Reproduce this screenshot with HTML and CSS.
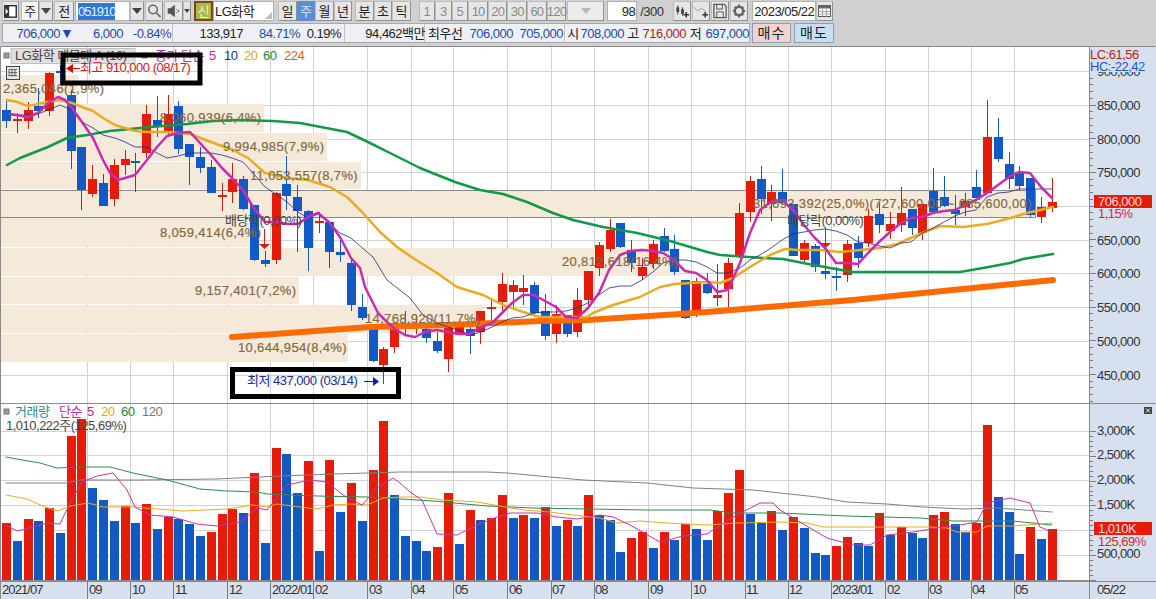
FILE: index.html
```html
<!DOCTYPE html>
<html lang="ko">
<head>
<meta charset="utf-8">
<title>LG화학 주봉 차트</title>
<link rel="stylesheet" href="styles.css">
</head>
<body>
<header class="toolbars">
  <div class="tools">
    <button class="btn b-layout"><svg viewBox="0 0 17 18" class="ico"><rect x="2" y="3" width="13" height="13" fill="#fff" stroke="#222" stroke-width="1.5"/><rect x="2" y="3" width="5" height="13" fill="#333"/><path d="M3 6l3 3.5-3 3.5z" fill="#fff"/></svg></button>
    <button class="btn b-ju">주</button>
    <button class="btn b-arrow"><i class="caret"></i></button>
    <button class="btn b-prev">전</button>
    <div class="field b-code"><span class="sel">051910</span></div>
    <button class="btn b-arrow2"><i class="caret"></i></button>
    <button class="btn b-search"><svg viewBox="0 0 17 18" class="ico"><circle cx="7.5" cy="7.5" r="4.5" fill="none" stroke="#666" stroke-width="1.6"/><path d="M11 11l4.5 4.5" stroke="#777" stroke-width="2.2"/></svg></button>
    <button class="btn b-speak"><svg viewBox="0 0 19 18" class="ico"><path d="M3 6h3l5-4v14l-5-4H3z" fill="#555"/><path d="M13 7v1M13 10v1M15 8v2" stroke="#555" stroke-width="1.2"/></svg></button>
    <button class="btn b-arrow3"><i class="caret small"></i></button>
    <div class="sin">신</div>
    <div class="field b-name">LG화학<i class="corner"></i></div>
    <div class="period">
      <button class="btn p">일</button><button class="btn p on">주</button><button class="btn p">월</button><button class="btn p">년</button>
    </div>
    <div class="period gap">
      <button class="btn p">분</button><button class="btn p">초</button><button class="btn p">틱</button>
    </div>
    <div class="period nums">
      <button class="btn n">1</button><button class="btn n">3</button><button class="btn n">5</button><button class="btn n">10</button><button class="btn n">20</button><button class="btn n">30</button><button class="btn n">60</button><button class="btn n">120</button>
    </div>
    <div class="btn b-combo"><i class="caret pale"></i></div>
    <div class="field b-count">98</div>
    <span class="total">/300</span>
    <button class="btn b-i"><svg viewBox="0 0 17 18" class="ico"><path d="M4 3v10M9 5v9" stroke="#444"/><rect x="2.5" y="5" width="3" height="5" fill="#444"/><rect x="7.5" y="7" width="3" height="5" fill="#444"/><path d="M13 10v6M10 13h6" stroke="#333" stroke-width="1.6"/></svg></button>
    <button class="btn b-i"><svg viewBox="0 0 17 18" class="ico"><path d="M1 5l4 4 4-3 5 4" fill="none" stroke="#999"/><path d="M13 10v6M10 13h6" stroke="#333" stroke-width="1.6"/></svg></button>
    <button class="btn b-i"><svg viewBox="0 0 17 18" class="ico"><path d="M2 2h11l2 2v12H2z" fill="none" stroke="#555" stroke-width="1.3"/><path d="M5 2v5h6V2M5 16v-6h7v6" fill="none" stroke="#555"/></svg></button>
    <button class="btn b-i"><svg viewBox="0 0 17 18" class="ico"><circle cx="8.5" cy="9" r="4.5" fill="none" stroke="#666" stroke-width="2.6"/><path d="M8.5 2v3M8.5 13v3M2 9h3M12 9h3M4 4.500l2 2M11 11.500l2 2M13 4.500l-2 2M6 11.500l-2 2" stroke="#666" stroke-width="2"/></svg></button>
    <div class="field b-date">2023/05/22</div>
    <button class="btn b-cal"><svg viewBox="0 0 15 18" class="ico"><rect x="1.500" y="3.500" width="12" height="11" fill="#fff" stroke="#555"/><path d="M1.500 3.500h12v3h-12z" fill="#666"/><path d="M1.500 9.500h12M1.500 12h12M5.500 6.500v8M9.500 6.500v8" stroke="#aaa"/></svg></button>
  </div>
  <div class="tools quote">
    <div class="panel">
      <div class="sec s-a"><span class="up">706,000</span><span class="tri">▼</span><span class="up">6,000</span><span class="up">-0.84%</span></div>
      <div class="sec s-b"><span>133,917</span><span class="up">84.71%</span><span>0.19%</span></div>
      <div class="sec s-c"><span>94,462백만</span></div>
      <div class="sec s-d"><span class="lbl">최우선</span><span class="up">706,000</span><span class="up">705,000</span></div>
      <div class="sec s-e"><span class="lbl">시</span><span class="up">708,000</span><span class="lbl">고</span><span class="dn">716,000</span><span class="lbl">저</span><span class="up">697,000</span></div>
    </div>
    <button class="trade buy">매수</button>
    <button class="trade sell">매도</button>
  </div>
</header>

<main class="chart">
  <svg class="pane pane-price" viewBox="0 46 1156 357">
    <rect class="axis-bg" x="1089" y="46" width="67" height="357"/>
    <path class="grid" d="M0 71.500H1089M0 105.500H1089M0 139.500H1089M0 172.500H1089M0 206.500H1089M0 240.500H1089M0 273.500H1089M0 307.500H1089M0 341.500H1089M0 375.500H1089"/>
    <g id="vgrid-price" class="grid"></g>
    <g class="bands">
      <rect x="0" y="75" width="78" height="28"/>
      <rect x="0" y="104" width="264" height="28"/>
      <rect x="0" y="133" width="327" height="28"/>
      <rect x="0" y="162" width="361" height="27"/>
      <rect x="0" y="218" width="259" height="29"/>
      <rect x="0" y="248" width="680" height="28"/>
      <rect x="0" y="277" width="299" height="27"/>
      <rect x="0" y="305" width="483" height="28"/>
      <rect x="0" y="334" width="348" height="28"/>
      <rect class="band-max" x="0.500" y="190.500" width="1035" height="27"/>
    </g>
    <g id="candles"></g>
    <g class="marks">
      <path d="M264.500 229v16M825.500 228v16"/>
      <polygon points="259,244 270,244 264.500,249"/>
      <polygon points="820,243 831,243 825.500,248"/>
    </g>
    <g id="ma-price"></g>
    <g class="band-labels">
      <text x="3" y="93">2,365,046(1,9%)</text>
      <text x="160" y="122">8,060,939(6,4%)</text>
      <text x="223" y="151">9,994,985(7,9%)</text>
      <text x="250" y="180">11,053,557(8,7%)</text>
      <text x="753" y="208">31,693,392(25,0%)(727,600,00 ~ 685,600,00)</text>
      <text x="160" y="237">8,059,414(6,4%)</text>
      <text x="562" y="266">20,812,618(16,4%)</text>
      <text x="195" y="295">9,157,401(7,2%)</text>
      <text x="365" y="323">14,768,920(11,7%)</text>
      <text x="238" y="352">10,644,954(8,4%)</text>
    </g>
    <text class="t dark" x="225" y="225">배당락(0,00%)</text>
    <text class="t dark" x="787" y="225">배당락(0,00%)</text>

    <rect class="legend-box" x="11" y="48.500" width="124" height="15"/>
    <text class="t dark" x="15" y="60">LG화학 매물대 A (10)</text>
    <rect class="sq" x="4" y="53" width="5" height="5"/>
    <rect class="sq" x="142" y="53" width="5" height="5"/>
    <text class="t c-ma5" x="155" y="60">종가 단순</text>
    <text class="t c-ma5" x="209" y="60">5</text>
    <text class="t c-ma10" x="224" y="60">10</text>
    <text class="t c-ma20" x="244" y="60">20</text>
    <text class="t c-ma60" x="263" y="60">60</text>
    <text class="t c-ma224" x="284" y="60">224</text>
    <g class="tbl-ico">
      <rect x="6.500" y="66.500" width="13" height="13"/>
      <path d="M9 69.500h8M9 72.500h8M9 75.500h8M9 69.500v7M12 69.500v7M15 69.500v7"/>
    </g>

    <rect class="note" x="63" y="55" width="137" height="28"/>
    <path class="arrow-hi" d="M72 68.500H80"/>
    <polygon class="arrow-hi-h" points="66,68.500 73,64 73,73"/>
    <text class="t c-hi" x="80" y="72">최고 910,000 (08/17)</text>
    <rect class="note" x="232.500" y="369.500" width="166" height="27"/>
    <text class="t c-lo" x="247" y="385">최저 437,000 (03/14)</text>
    <path class="arrow-lo" d="M364 381.500H374"/>
    <polygon class="arrow-lo-h" points="379,381.500 373,377 373,386"/>

    <g id="ticks-price" class="ticks"></g>
    <g class="axis-labels">
      <text x="1097" y="76">900,000</text>
      <text x="1097" y="110">850,000</text>
      <text x="1097" y="144">800,000</text>
      <text x="1097" y="177">750,000</text>
      <text x="1097" y="245">650,000</text>
      <text x="1097" y="278">600,000</text>
      <text x="1097" y="312">550,000</text>
      <text x="1097" y="346">500,000</text>
      <text x="1097" y="380">450,000</text>
    </g>
    <rect class="axis-cover" x="1090" y="47" width="66" height="25"/>
    <text class="t axis-lc" x="1090" y="59">LC:61,56</text>
    <text class="t axis-hc" x="1090" y="71">HC:-22,42</text>
    <rect class="tag" x="1094" y="195" width="58" height="13"/>
    <text class="t tag-text" x="1098" y="206">706,000</text>
    <text class="t axis-pct" x="1098" y="218">1,15%</text>
    <path class="frame" d="M0.500 46.500H1155.500M0.500 46.500V403M1089.500 46.500V403"/>
  </svg>

  <svg class="pane pane-vol" viewBox="0 403 1156 178">
    <rect class="axis-bg" x="1089" y="403" width="67" height="178"/>
    <path class="grid" d="M0 431.500H1089M0 455.500H1089M0 480.500H1089M0 505.500H1089M0 530.500H1089M0 555.500H1089"/>
    <g id="vgrid-vol" class="grid"></g>
    <g id="bars"></g>
    <g id="ma-vol"></g>
    <rect class="sq" x="4" y="409" width="5" height="5"/>
    <text class="t c-vol" x="15" y="416">거래량</text>
    <text class="t c-ma5" x="59" y="416">단순</text>
    <text class="t c-ma5" x="87" y="416">5</text>
    <text class="t c-ma20" x="101" y="416">20</text>
    <text class="t c-ma60" x="121" y="416">60</text>
    <text class="t c-ma120" x="142" y="416">120</text>
    <text class="t dark" x="6" y="430">1,010,222주(125,69%)</text>
    <g id="ticks-vol" class="ticks"></g>
    <g class="axis-labels">
      <text x="1097" y="435">3,000K</text>
      <text x="1097" y="459">2,500K</text>
      <text x="1097" y="484">2,000K</text>
      <text x="1097" y="509">1,500K</text>
      <text x="1097" y="558">500,000</text>
    </g>
    <rect class="tag" x="1094" y="522" width="58" height="13"/>
    <text class="t tag-text" x="1098" y="533">1,010K</text>
    <text class="t axis-pct" x="1098" y="546">125,69%</text>
    <rect class="close-box" x="1144" y="407" width="8" height="7"/>
    <path class="close-x" d="M1146 408.500l4 4M1150 408.500l-4 4"/>
    <path class="frame" d="M0.500 403.500H1155.500M0.500 403V581M1089.500 403V581M0 580.500H1089"/>
  </svg>

  <svg class="pane pane-x" viewBox="0 581 1156 18">
    <rect class="axis-bg" x="0" y="581" width="1156" height="18"/>
    <g id="ticks-x" class="ticks"></g>
    <g class="x-labels">
      <text x="2" y="594">2021/07</text><text x="89" y="594">09</text><text x="132" y="594">10</text><text x="175" y="594">11</text><text x="229" y="594">12</text><text x="272" y="594">2022/01</text><text x="315" y="594">02</text><text x="369" y="594">03</text><text x="412" y="594">04</text><text x="455" y="594">05</text><text x="509" y="594">06</text><text x="552" y="594">07</text><text x="595" y="594">08</text><text x="650" y="594">09</text><text x="693" y="594">10</text><text x="746" y="594">11</text><text x="789" y="594">12</text><text x="832" y="594">2023/01</text><text x="887" y="594">02</text><text x="929" y="594">03</text><text x="972" y="594">04</text><text x="1015" y="594">05</text><text x="1097" y="594">05/22</text>
    </g>
    <path class="frame" d="M0 581.500H1156M0.500 581V599M1089.500 581V599"/>
  </svg>
</main>
<script src="chart.js"></script>
</body>
</html>
```
FILE: styles.css
```css
html, body { margin: 0; padding: 0; width: 1156px; height: 599px; overflow: hidden; background: #d0d0d0; }
body { font: 13px/1 "Liberation Sans", "Noto Sans CJK KR", sans-serif; color: #222; letter-spacing: -.5px; }
button { font: inherit; letter-spacing: inherit; color: inherit; padding: 0; margin: 0; }

.toolbars { height: 46px; padding: 1px 0 0 2px; box-sizing: border-box; background: #d0d0d0; }
.tools { display: flex; align-items: stretch; height: 20px; }
.btn { box-sizing: border-box; height: 20px; background: #e6e6e6; border: 1px solid #bdbdbd; border-right-color: #909090; border-bottom-color: #909090; display: flex; align-items: center; justify-content: center; }
.ico { width: 100%; height: 100%; display: block; }
.field { box-sizing: border-box; height: 20px; background: #fff; border: 1px solid #b0b0b0; display: flex; align-items: center; }
.caret { width: 0; height: 0; border-left: 5px solid transparent; border-right: 5px solid transparent; border-top: 6px solid #444; }
.caret.small { border-left-width: 3px; border-right-width: 3px; border-top-width: 4px; }
.caret.pale { border-top-color: #b8b8b8; }

.b-layout { width: 17px; margin-right: 2px; }
.b-ju { width: 18px; background: #f4f4f4; }
.b-arrow { width: 14px; margin-right: 1px; }
.b-prev { width: 20px; margin-right: 1px; }
.b-code { width: 55px; padding-left: 2px; }
.sel { background: #2f78d4; color: #e4f0ff; padding: 2px 0; width: 37px; display: block; letter-spacing: -1px; }
.b-arrow2 { width: 14px; margin-right: 1px; }
.b-search { width: 18px; margin-right: 1px; }
.b-speak { width: 19px; }
.b-arrow3 { width: 8px; margin-right: 3px; }
.sin { box-sizing: border-box; width: 19px; height: 20px; border: 2px solid #7a4a16; background: #a9b84e; color: #ecf3c8; display: flex; align-items: center; justify-content: center; }
.b-name { width: 61px; padding-left: 1px; position: relative; margin-right: 4px; }
.corner { position: absolute; right: 1px; bottom: 1px; width: 0; height: 0; border-left: 7px solid transparent; border-bottom: 7px solid #bbb; }
.period { display: flex; }
.period .p { width: 18.500px; }
.period .on { background: #5b8fd0; color: #dce9f8; border-color: #5b8fd0; }
.period.gap { margin-left: 3px; margin-right: 8px; }
.nums .n { width: 16.600px; color: #8b8b8b; font-size: 13px; font-weight: 400; }
.nums .n:nth-child(n+4) { width: 19.600px; letter-spacing: -.8px; }
.b-combo { width: 37px; margin-left: 1px; margin-right: 3px; background: #ececec; }
.b-count { width: 30px; justify-content: flex-end; padding-right: 1px; }
.total { width: 36px; padding-left: 3px; align-self: center; color: #333; box-sizing: border-box; }
.b-i { width: 18px; margin-right: 1px; }
.b-date { width: 64px; margin-left: 3px; justify-content: center; color: #222; }
.b-cal { width: 17px; }

.quote { height: 21px; margin-top: 2px; }
.panel { width: 748px; box-sizing: border-box; display: flex; height: 20px; background: #eef0f6; border: 1px solid #a8a8a8; }
.sec { box-sizing: border-box; display: grid; align-items: center; justify-items: end; border-right: 1px solid #c4c4c4; }
.sec:last-child { border-right: 0; }
.up { color: #1f4aa8; }
.dn { color: #b01c1c; }
.tri { color: #1f4aa8; font-size: 14px; justify-self: start; }
.lbl { justify-self: center; color: #222; }
.s-d .lbl { justify-self: start; }
.s-a { width: 170px; grid-template-columns: 57px 15px 48px 48px; }
.s-b { width: 172px; grid-template-columns: 70px 57px 41px; }
.s-c { width: 80px; grid-template-columns: 80px; }
.s-d { width: 140px; padding-left: 3px; grid-template-columns: 36px 49px 50px; }
.s-e { width: 184px; padding-left: 1px; grid-template-columns: 14px 44px 18px 44px 19px 44px; }
.trade { box-sizing: border-box; height: 20px; border: 1px solid #8aa0b8; font-size: 14px; letter-spacing: 1px; }
.buy { width: 39px; margin-left: 2px; background: #f6d2cf; }
.sell { width: 40px; margin-left: 3px; background: #c9def2; }

.chart { display: flex; flex-direction: column; background: #fff; }
.pane { display: block; width: 1156px; font-family: "Liberation Sans", "Noto Sans CJK KR", sans-serif; }
.pane-price { height: 357px; }
.pane-vol { height: 178px; }
.pane-x { height: 18px; }

.axis-bg, .axis-cover { fill: #d6e0ee; }
.grid { stroke: #d2d2d2; stroke-width: 1; fill: none; }
.frame { stroke: #8a8a8a; fill: none; stroke-width: 1; }
.ticks { stroke: #7c7c7c; fill: none; stroke-width: 1; }
.bands rect { fill: #f5e9da; }
.bands .band-max { stroke: #8a8a8a; }
.band-labels text { fill: #84693f; font-size: 13px; letter-spacing: .35px; stroke: #84693f; stroke-width: .2; }
.t { font-size: 13px; letter-spacing: -.5px; }
.dark { fill: #444; }
.c-ma5 { fill: #c028a8; }
.c-ma10 { fill: #1a2f8a; }
.c-ma20 { fill: #e0a820; }
.c-ma60 { fill: #128a44; }
.c-ma224 { fill: #d8621a; }
.c-ma120 { fill: #777; }
.c-vol { fill: #2f8a8a; }
.c-hi { fill: #d01818; }
.c-lo { fill: #142c9c; }
.legend-box { fill: #e0e0e0; stroke: #c0c0c0; }
.sq { fill: #999; stroke: #777; }
.tbl-ico rect { fill: #e8e8e8; stroke: #444; }
.tbl-ico path { stroke: #666; fill: none; }
.note { fill: none; stroke: #000; stroke-width: 5; }
.arrow-hi { stroke: #d80000; stroke-width: 1; }
.arrow-hi-h { fill: #e00000; }
.arrow-lo { stroke: #1010d0; stroke-width: 1; }
.arrow-lo-h { fill: #1010d0; }
.marks path { stroke: #e01a0a; fill: none; }
.marks polygon { fill: #e01a0a; }
.axis-labels text { font-size: 13px; letter-spacing: -.6px; fill: #333; }
.x-labels text { font-size: 13px; letter-spacing: -.9px; fill: #333; }
.axis-lc { fill: #c02020; }
.axis-hc { fill: #1a5ac0; }
.tag { fill: #e61c0a; }
.tag-text { fill: #fbdcdc; }
.axis-pct { fill: #c83030; }
.close-box { fill: #444; }
.close-x { stroke: #fff; fill: none; }
.wick-r { stroke: #c81e10; }
.wick-b { stroke: #1259c3; }
.body-r { fill: #e61c0a; }
.body-b { fill: #1259c3; }
.ma { fill: none; stroke-linejoin: round; stroke-linecap: round; }
.ma5 { stroke: #c92cb0; stroke-width: 2.500; }
.ma10 { stroke: #1a2a80; stroke-width: .8; }
.ma20 { stroke: #e8ac22; stroke-width: 2.500; }
.ma60 { stroke: #109a48; stroke-width: 2.500; }
.ma224 { stroke: #ff6a00; stroke-width: 6; }
.v5 { stroke: #c035a8; stroke-width: 1; }
.v20 { stroke: #e8ac22; stroke-width: 1; }
.v60 { stroke: #2e8b50; stroke-width: 1; }
.v120 { stroke: #808080; stroke-width: 1; }
```
FILE: chart.js
```js
var NS = 'http://www.w3.org/2000/svg';
var STEP = 10.78;
var VLINES = [87, 130, 173, 227, 270, 313, 367, 411, 453, 507, 551, 594, 648, 691, 745, 788, 831, 885, 928, 971, 1014];

var CANDLES = `b 100 110 121 128|r 113 119 121 133|r 102 110 121 129|b 88 106 111 118|r 72 73 111 116|b 65 71 73 85|b 90 95 151 169|b 147 147 190 210|r 165 179 194 197|b 174 183 206 206|r 159 165 199 206|r 150 159 165 175|b 153 161 163 192|r 105 114 153 158|b 96 120 127 137|r 95 114 131 137|b 101 106 149 154|b 144 144 157 185|b 147 157 168 173|b 160 167 193 193|r 183 195 197 211|r 163 179 192 203|b 176 179 209 210|b 205 205 260 261|b 251 260 264 267|r 192 193 260 264|b 156 184 196 210|b 185 197 211 252|b 210 211 248 271|r 212 221 223 233|b 222 222 252 268|b 237 252 255 262|b 257 263 305 311|b 294 307 318 320|b 325 326 361 362|r 347 349 365 384|r 323 323 347 353|b 311 323 325 335|r 315 324 327 334|b 323 329 338 343|b 332 341 351 353|r 323 328 359 372|r 323 327 333 335|b 323 329 336 354|r 311 311 332 344|r 298 307 309 320|r 273 284 302 312|r 280 285 292 307|r 275 288 292 305|b 282 285 313 315|b 294 311 336 340|r 305 314 334 343|b 315 315 334 337|r 288 300 332 337|r 271 271 300 307|r 242 245 268 276|r 219 230 249 252|b 223 223 247 248|b 240 250 263 272|r 258 267 276 280|r 240 244 264 269|b 228 236 251 252|b 235 249 272 275|b 280 280 318 319|r 278 281 311 317|b 273 284 293 294|r 264 295 298 306|r 258 263 289 307|r 203 213 256 258|r 176 181 212 222|b 166 179 199 214|r 185 192 204 221|b 169 192 203 204|b 204 204 256 256|r 240 243 260 262|b 244 246 267 272|b 245 271 274 279|b 267 276 278 291|r 240 244 275 282|b 236 243 258 268|r 209 216 243 247|b 203 214 225 233|r 212 224 231 239|r 187 213 225 232|b 209 209 228 235|r 204 204 233 240|b 168 191 212 214|b 176 197 206 207|b 195 210 214 225|r 193 201 207 216|b 170 187 198 198|r 100 137 193 194|b 118 137 159 162|b 152 164 179 189|b 166 172 186 190|b 178 178 215 217|r 197 207 217 223|r 178 202 208 212`;

var VOLUMES = 'r523 b541 r519 b521 r508 b533 r436 r419 b488 b500 b521 r506 b523 r504 b529 r517 b519 b524 b536 r532 r514 r509 b513 r473 b543 r448 b454 b493 r461 b551 r460 b512 r483 b521 r470 r421 b495 b536 b541 b551 r547 r493 b544 r510 b520 r518 r495 b518 r515 b518 r507 b526 r520 b526 r495 b515 b520 b552 r538 r532 b548 r532 b540 r524 b529 b540 r511 r493 r470 b514 b523 r511 b530 r517 b528 b553 b555 r546 r537 b543 b546 r513 b535 r527 b533 b538 r515 r512 b524 b532 r523 r425 b497 b512 b554 r527 b539 r529';

var MA_PRICE = {
  ma224: '232,337 370,327 450,325 540,321 587,320 680,314 720,311 853,300 1053,280',
  ma60: '7,165 20,158 48,147 67,138 87,135 110,131 130,129 150,127 187,124 213,121 240,120 273,121 300,123 347,132 370,143 390,153 420,168 455,182 480,190 503,194 527,202 553,213 573,220 603,227 637,233 670,241 707,252 720,255 763,258 783,259 803,263 830,268 853,272 893,272 960,272 983,268 1010,263 1023,259 1053,254',
  ma20: '7,100 17,102 28,106 38,104 48,102 60,100 72,103 82,107 93,111 103,118 115,125 125,128 135,131 147,132 167,132 190,134 211,142 233,150 248,158 265,173 287,178 308,180 330,187 347,197 362,212 380,232 397,247 413,258 437,273 457,287 483,295 503,305 523,312 540,317 587,317 593,313 613,305 640,297 660,287 675,284 707,282 720,283 733,278 750,267 770,255 785,249 797,250 820,250 840,252 860,250 880,248 897,244 920,234 940,226 963,227 987,224 1007,219 1027,213 1053,207',
  ma10: '10,115 28,115 38,114 48,110 60,105 72,110 82,122 93,128 103,135 115,138 125,142 135,147 147,147 157,153 167,158 178,156 190,153 200,153 211,153 222,155 232,158 243,162 253,173 265,187 277,195 287,202 298,212 308,218 318,214 329,223 340,233 351,238 360,246 373,257 387,280 410,298 423,315 437,323 448,327 458,330 470,335 481,332 492,327 502,322 512,318 523,317 534,313 545,312 556,312 566,311 577,308 588,303 599,295 609,288 620,286 631,286 642,280 653,272 663,263 674,260 685,260 696,262 707,267 717,273 728,273 740,268 750,260 760,255 771,248 782,240 793,234 804,232 814,230 825,229 836,231 847,235 858,242 868,243 879,246 890,248 901,243 911,242 922,233 933,228 944,222 955,216 965,212 976,210 987,197 998,193 1009,192 1019,189 1052,189',
  ma5: '10,114 28,117 38,113 48,103 58,97 65,100 71,107 82,122 93,138 103,160 110,173 118,180 125,178 135,175 147,160 157,147 167,136 178,133 190,132 200,143 211,155 222,168 232,178 243,190 253,207 265,222 277,222 287,224 298,224 308,217 318,213 329,222 340,237 351,258 360,268 365,287 370,297 378,313 388,323 395,329 405,335 415,337 425,332 437,330 448,332 458,334 470,334 481,327 492,323 502,313 512,303 523,295 534,295 545,301 556,307 566,317 577,318 588,308 599,293 609,270 620,255 631,251 642,250 653,251 663,253 674,260 685,271 696,273 707,280 717,292 728,290 740,263 750,233 760,210 771,202 782,200 793,210 804,225 814,237 825,248 836,263 847,263 858,264 868,253 879,242 890,232 901,223 911,218 922,217 933,213 944,211 955,210 965,205 976,200 987,193 998,185 1009,177 1019,172 1030,173 1041,187 1052,198'
};

var MA_VOL = {
  v120: '6,483 65,483 80,480 140,480 217,479 280,476 335,474 400,472 487,472 507,473 550,477 583,480 647,483 693,488 753,490 780,493 817,497 847,502 887,504 923,507 963,509 997,508 1052,512',
  v60: '6,457 22,460 40,463 57,468 80,467 110,467 133,473 167,480 200,489 227,491 257,492 267,494 317,496 367,497 400,499 433,501 487,506 533,508 647,510 710,510 733,513 780,513 847,516 920,518 953,521 1013,521 1052,525',
  v20: '6,495 27,499 45,507 58,511 70,506 88,503 103,507 133,507 157,509 183,511 227,509 253,505 267,507 277,504 300,507 317,509 333,505 350,504 367,505 383,498 400,497 420,497 443,500 477,502 500,506 523,510 550,512 573,515 600,518 617,523 640,521 667,523 707,525 737,523 780,522 807,523 823,527 880,527 930,527 947,528 957,532 977,532 987,526 1013,526 1052,523',
  v5: '6,525 17,531 33,527 47,523 60,524 70,503 82,482 97,476 113,473 127,490 135,507 150,515 173,517 197,524 217,526 240,522 257,508 267,510 287,485 310,480 327,482 343,495 362,505 377,488 393,478 400,483 410,492 422,500 437,534 457,535 477,525 497,517 510,513 537,513 557,517 577,519 600,515 613,517 630,525 660,542 683,536 707,534 733,517 760,503 773,503 780,510 800,522 827,538 853,545 870,545 887,535 913,532 937,528 960,525 977,522 987,503 1010,498 1030,503 1040,527 1052,532'
};

function el(parent, name, attrs) {
  var node = document.createElementNS(NS, name);
  for (var key in attrs) node.setAttribute(key, attrs[key]);
  parent.appendChild(node);
  return node;
}

function barX(i) { return Math.round(2 + STEP * i); }

function vLines(id, y1, y2) {
  var g = document.getElementById(id);
  VLINES.forEach(function (x) {
    el(g, 'path', { d: 'M' + (x + 0.5) + ' ' + y1 + 'V' + y2 });
  });
}

function ticks(id, from, step, y0, y1, major) {
  var g = document.getElementById(id);
  var n = 0;
  for (var y = from; y < y1; y += step) {
    if (y >= y0) {
      var len = (n % major === 0) ? 7 : 4;
      var py = Math.round(y) + 0.5;
      el(g, 'path', { d: 'M1089 ' + py + 'h' + len });
    }
    n++;
  }
}

function drawCandles() {
  var g = document.getElementById('candles');
  CANDLES.split('|').forEach(function (row, i) {
    var p = row.split(' ');
    var c = p[0], hi = +p[1], top = +p[2], bot = +p[3], lo = +p[4];
    var x = barX(i);
    el(g, 'path', { 'class': 'wick-' + c, d: 'M' + (x + 4.5) + ' ' + hi + 'V' + lo });
    el(g, 'rect', { 'class': 'body-' + c, x: x, y: top, width: 9, height: Math.max(bot - top, 2) });
  });
}

function drawBars() {
  var g = document.getElementById('bars');
  VOLUMES.split(' ').forEach(function (v, i) {
    var top = +v.slice(1);
    el(g, 'rect', { 'class': 'body-' + v[0], x: barX(i), y: top, width: 9, height: 580 - top });
  });
}

function drawLines(id, set) {
  var g = document.getElementById(id);
  Object.keys(set).forEach(function (key) {
    el(g, 'polyline', { 'class': 'ma ' + key, points: set[key] });
  });
}

vLines('vgrid-price', 47, 403);
vLines('vgrid-vol', 404, 580);
ticks('ticks-price', 71, 6.73, 47, 403, 5);
ticks('ticks-vol', 431, 4.96, 404, 580, 5);
drawCandles();
drawBars();
drawLines('ma-price', MA_PRICE);
drawLines('ma-vol', MA_VOL);
var tx = document.getElementById('ticks-x');
VLINES.forEach(function (x) { el(tx, 'path', { d: 'M' + (x + 0.5) + ' 581V599' }); });
```
